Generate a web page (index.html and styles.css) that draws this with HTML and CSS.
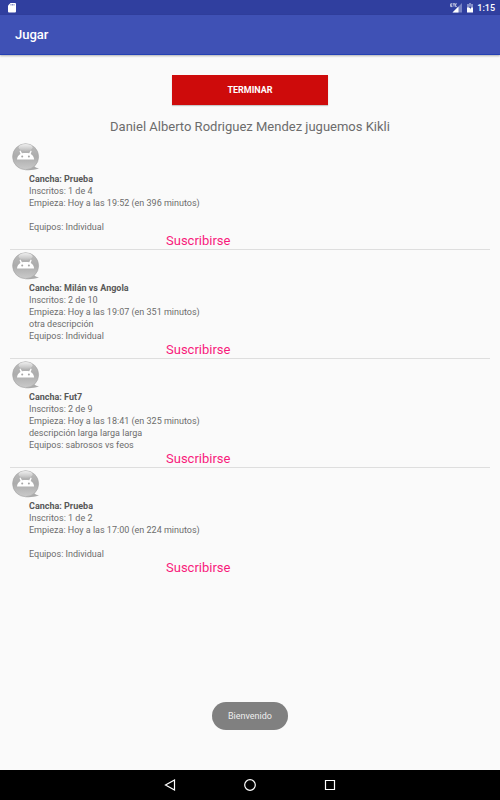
FILE: index.html
```html
<!DOCTYPE html>
<html lang="es">
  <head>
    <meta charset="utf-8" />
    <meta name="viewport" content="width=device-width, initial-scale=1.0" />
    <title>Jugar</title>
    <link rel="stylesheet" href="styles.css">
  </head>
  <body>
    <!-- shared avatar, used by every match -->
    <svg class="defs" width="0" height="0" aria-hidden="true">
      <defs>
        <linearGradient id="bubble" x1="0" y1="0" x2="0" y2="1">
          <stop offset="0" stop-color="#bdbdbd" />
          <stop offset="0.5" stop-color="#acacac" />
          <stop offset="1" stop-color="#cacaca" />
        </linearGradient>
        <linearGradient id="shine" x1="0" y1="0" x2="0" y2="1">
          <stop offset="0" stop-color="#fff" stop-opacity="0.75" />
          <stop offset="1" stop-color="#fff" stop-opacity="0.1" />
        </linearGradient>
      </defs>
      <symbol id="avatar" viewBox="0 0 28 28">
        <path d="M13 26.900c4 .5 9 .3 14-1.700-2 0-3.500-.6-5-2.200z" fill="#aaa" />
        <circle cx="13.600" cy="13.700" r="13" fill="url(#bubble)" stroke="#a2a2a2" stroke-width=".6" />
        <ellipse cx="13.600" cy="4.500" rx="7" ry="3.400" fill="url(#shine)" />
        <path d="M5 16.600c.2-2.600 1.300-4.500 3.500-5.600L7.500 8l1-.4 1.500 2.700c2.300-.5 4.900-.5 7.200 0l1.500-2.700 1 .4-1 3c2.200 1.100 3.200 3 3.400 5.600z" fill="#fff" />
        <circle cx="10.200" cy="13.600" r="1" fill="#a5a5a5" />
        <circle cx="16.900" cy="13.600" r="1" fill="#a5a5a5" />
      </symbol>
    </svg>

    <div class="status">
      <svg class="sdcard" width="8" height="10" viewBox="0 0 8 10">
        <path d="M2.500 0H7a1 1 0 0 1 1 1v7.500a1 1 0 0 1-1 1H1a1 1 0 0 1-1-1v-6z" fill="#fff" />
        <path d="M3 1v1.500M4.500 1v1.500M6 1v1.500" stroke="#303f9f" stroke-width=".6" />
      </svg>
      <div class="status-right">
        <svg width="13" height="10" viewBox="0 0 13 10">
          <path d="M12 0v9.500H2.500z" fill="#7782c4" />
          <path d="M8.500 3.500v6h-6z" fill="#fff" />
          <path d="M2.500 .8H.7v2.800h1.800M.7 2.200h1.500M3 .8h2M4 .8v2.800M6.800 .8H5.600v2.800h1.200" fill="none" stroke="#fff" stroke-width=".7" />
        </svg>
        <svg width="6" height="10" viewBox="0 0 6 10">
          <path d="M2 0h2v1h2v4H0V1h2z" fill="#858fca" />
          <path d="M0 4.500h6v5H0z" fill="#fff" />
          <path d="M3.400 2.200 2 4.800h1v1.800l1.300-2.600h-.9z" fill="#303f9f" />
        </svg>
        <span>1:15</span>
      </div>
    </div>

    <header class="toolbar">
      <h1>Jugar</h1>
    </header>

    <main class="content">
      <button type="button" class="end-btn">TERMINAR</button>
      <p class="greeting">Daniel Alberto Rodriguez Mendez juguemos Kikli</p>

      <ul class="matches">
        <li class="match">
          <svg class="avatar"><use href="#avatar" /></svg>
          <div class="info">
            <strong>Cancha: Prueba</strong>
            <span>Inscritos: 1 de 4</span>
            <span>Empieza: Hoy a las 19:52 (en 396 minutos)</span>
            <span></span>
            <span>Equipos: Individual</span>
          </div>
          <a class="join" href="#">Suscribirse</a>
        </li>
        <li class="match">
          <svg class="avatar"><use href="#avatar" /></svg>
          <div class="info">
            <strong>Cancha: Milán vs Angola</strong>
            <span>Inscritos: 2 de 10</span>
            <span>Empieza: Hoy a las 19:07 (en 351 minutos)</span>
            <span>otra descripción</span>
            <span>Equipos: Individual</span>
          </div>
          <a class="join" href="#">Suscribirse</a>
        </li>
        <li class="match">
          <svg class="avatar"><use href="#avatar" /></svg>
          <div class="info">
            <strong>Cancha: Fut7</strong>
            <span>Inscritos: 2 de 9</span>
            <span>Empieza: Hoy a las 18:41 (en 325 minutos)</span>
            <span>descripción larga larga larga</span>
            <span>Equipos: sabrosos vs feos</span>
          </div>
          <a class="join" href="#">Suscribirse</a>
        </li>
        <li class="match">
          <svg class="avatar"><use href="#avatar" /></svg>
          <div class="info">
            <strong>Cancha: Prueba</strong>
            <span>Inscritos: 1 de 2</span>
            <span>Empieza: Hoy a las 17:00 (en 224 minutos)</span>
            <span></span>
            <span>Equipos: Individual</span>
          </div>
          <a class="join" href="#">Suscribirse</a>
        </li>
      </ul>
    </main>

    <div class="toast" role="status">Bienvenido</div>

    <nav class="navbar">
      <button type="button" aria-label="Atrás">
        <svg width="12" height="12" viewBox="0 0 12 12"><path d="M10.500 1v10L1.500 6z" /></svg>
      </button>
      <button type="button" aria-label="Inicio">
        <svg width="12" height="12" viewBox="0 0 12 12"><circle cx="6" cy="6" r="5.300" /></svg>
      </button>
      <button type="button" aria-label="Recientes">
        <svg width="12" height="12" viewBox="0 0 12 12"><path d="M1.500 1.500h9v9h-9z" /></svg>
      </button>
    </nav>
  </body>
</html>
```

FILE: styles.css
```css
* {
  box-sizing: border-box;
}
body {
  display: flex;
  flex-direction: column;
  min-height: 100vh;
  margin: 0;
  background-color: #fafafa;
  color: #6c6c6c;
  font-family: Roboto, sans-serif;
  font-size: 9px;
  line-height: 12px;
}
.defs {
  position: absolute;
}
.status {
  display: flex;
  align-items: center;
  justify-content: space-between;
  height: 15px;
  padding: 0 5px 0 8px;
  background-color: #303f9f;
  color: #fff;
  font-weight: 500;
}
.status-right {
  display: flex;
  align-items: center;
  gap: 4px;
}
.toolbar {
  display: flex;
  align-items: center;
  height: 40px;
  padding: 0 15px;
  background-color: #3f51b5;
  border-bottom: 1px solid #2440b4;
  box-shadow: 0 1px 2px rgba(0, 0, 0, 0.3);
  color: #fff;
}
.toolbar h1 {
  margin: 0;
  font-size: 13px;
  font-weight: 500;
}
.content {
  flex: 1;
  display: flex;
  flex-direction: column;
  align-items: center;
  padding: 20px 10px;
}
.end-btn {
  width: 156px;
  height: 30px;
  padding: 0;
  border: 0;
  background-color: #ce0b0b;
  box-shadow: 0 1px 1px rgba(0, 0, 0, 0.2);
  color: #fff;
  font: bold 9px Roboto, sans-serif;
}
.greeting {
  margin: 14px 0 6px;
  font-size: 13px;
  line-height: 16px;
}
.matches {
  align-self: stretch;
  margin: 0;
  padding: 0;
  list-style: none;
}
.match {
  display: flex;
  flex-direction: column;
  align-items: flex-start;
  padding-top: 2px;
  border-bottom: 1px solid #dedede;
}
.match:last-child {
  border-bottom: 0;
}
.avatar {
  width: 28px;
  height: 28px;
  margin: 0 2px 2px;
}
.info {
  padding-left: 19px;
}
.info strong,
.info span {
  display: block;
  min-height: 12px;
}
.info strong {
  color: #585858;
}
.join {
  margin-left: 32.5%;
  color: #f81a7c;
  font-size: 13px;
  line-height: 16px;
  text-decoration: none;
}
.toast {
  position: fixed;
  bottom: 70px;
  left: 50%;
  transform: translateX(-50%);
  padding: 8px 16px;
  border-radius: 14px;
  background-color: #808080;
  color: #eee;
}
.navbar {
  display: flex;
  justify-content: center;
  height: 30px;
  background-color: #000;
}
.navbar button {
  display: flex;
  align-items: center;
  justify-content: center;
  width: 80px;
  padding: 0;
  border: 0;
  background: none;
}
.navbar svg {
  fill: none;
  stroke: #fff;
  stroke-width: 1.2;
}
```
